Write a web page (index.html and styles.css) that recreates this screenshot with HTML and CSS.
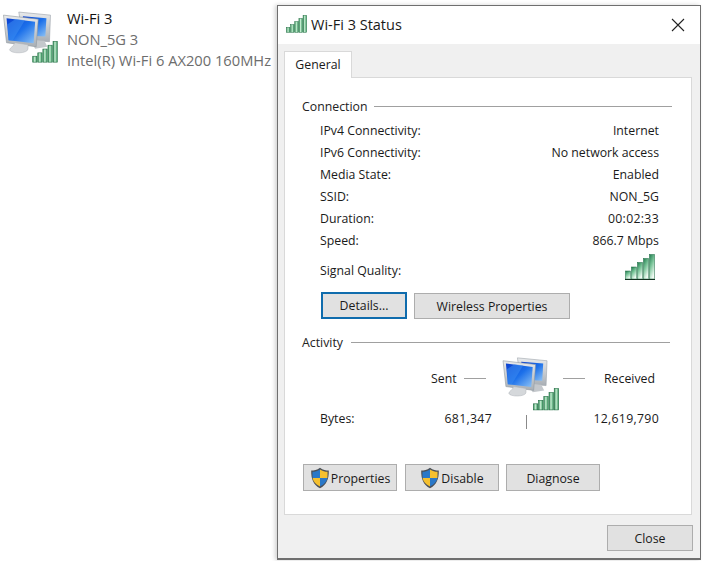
FILE: index.html
```html
<!DOCTYPE html>
<html lang="en">
<head>
<meta charset="utf-8">
<title>Wi-Fi 3 Status</title>
<link rel="stylesheet" href="styles.css">
</head>
<body>
<svg class="defs" width="0" height="0" aria-hidden="true">
  <defs>
    <linearGradient id="bar" x1="0" y1="0" x2="1" y2="0">
      <stop offset="0" stop-color="#2f8a55"/><stop offset=".45" stop-color="#c4ecd0"/><stop offset="1" stop-color="#3b9a62"/>
    </linearGradient>
    <linearGradient id="barv" x1="0" y1="0" x2=".5" y2="1">
      <stop offset="0" stop-color="#1f7a4d"/><stop offset=".5" stop-color="#7cc69b"/><stop offset="1" stop-color="#f0faf3"/>
    </linearGradient>
    <linearGradient id="screen" x1="0" y1="0" x2="1" y2="1">
      <stop offset="0" stop-color="#0a3fd0"/><stop offset=".5" stop-color="#1c70ea"/><stop offset="1" stop-color="#8fc4f5"/>
    </linearGradient>
    <linearGradient id="case" x1="0" y1="0" x2="0" y2="1">
      <stop offset="0" stop-color="#e8eaec"/><stop offset="1" stop-color="#a9afb5"/>
    </linearGradient>
    <symbol id="signal" viewBox="0 0 30 26">
      <g fill="url(#bar)" stroke="#1f6b40" stroke-width=".7">
        <rect x=".5" y="18" width="5" height="7"/>
        <rect x="6.500" y="14" width="5" height="11"/>
        <rect x="12.500" y="9.500" width="5" height="15.500"/>
        <rect x="18.500" y="5" width="5" height="20"/>
        <rect x="24.500" y=".5" width="5" height="24.500"/>
      </g>
    </symbol>
    <symbol id="signal-q" viewBox="0 0 30 26">
      <g fill="url(#barv)" stroke="#17683f" stroke-width=".5">
        <rect x=".5" y="17" width="5" height="8"/>
        <rect x="6.500" y="13" width="5" height="12"/>
        <rect x="12.500" y="8.500" width="5" height="16.500"/>
        <rect x="18.500" y="4.500" width="5" height="20.500"/>
        <rect x="24.500" y=".5" width="5" height="24.500"/>
      </g>
      <path d="M0 25.500H30" stroke="#12301f" stroke-width="1"/>
    </symbol>
    <symbol id="computers" viewBox="0 0 50 46">
      <path d="M16 3 47 6 46 32 20 30Z" fill="url(#case)" stroke="#9aa2a9" stroke-width=".6"/>
      <path d="M20 7 43 9 42 27 21 26Z" fill="url(#screen)"/>
      <path d="M27 30 41 31 44 37 32 39Z" fill="#c4c8cc"/>
      <path d="M1 6 35 10 33 37 4 33Z" fill="url(#case)" stroke="#8f979e" stroke-width=".6"/>
      <path d="M4 9 32 12.500 30.500 33.500 6 30.500Z" fill="url(#screen)"/>
      <path d="M13 9.800 22 11 10 30.800 6 30.500 5 15Z" fill="#3d8df0" opacity=".55"/>
      <path d="M12 33 25 35 25 39C25 44 8 44 7 40 7 38 11 37 12 33Z" fill="#d5d8db" stroke="#adb2b7" stroke-width=".5"/>
    </symbol>
    <symbol id="shield" viewBox="0 0 20 22">
      <path d="M10 .7C7 3 4 3.500 1.200 3.500 1 12 3.500 18 10 21.300 16.500 18 19 12 18.800 3.500 16 3.500 13 3 10 .7Z" fill="#4a4f57"/>
      <path d="M10 2.500V11H2.600C2.400 8.500 2.400 6.500 2.500 4.800 5 4.700 7.500 4.200 10 2.500Z" fill="#2a78c8"/>
      <path d="M10 2.500V11H17.400C17.600 8.500 17.600 6.500 17.500 4.800 15 4.700 12.500 4.200 10 2.500Z" fill="#f5c02f"/>
      <path d="M2.600 11H10V19.600C5.500 17 3.200 14.500 2.600 11Z" fill="#f5c02f"/>
      <path d="M17.400 11H10V19.600C14.500 17 16.800 14.500 17.400 11Z" fill="#2a78c8"/>
    </symbol>
  </defs>
</svg>

<main class="desktop">
  <section class="adapter">
    <span class="adapter-icon">
      <svg class="adapter-pc"><use href="#computers"/></svg>
      <svg class="adapter-signal"><use href="#signal"/></svg>
    </span>
    <div class="adapter-text">
      <div class="adapter-name">Wi-Fi 3</div>
      <div>NON_5G 3</div>
      <div>Intel(R) Wi-Fi 6 AX200 160MHz</div>
    </div>
  </section>

  <section class="window">
    <header class="titlebar">
      <svg class="title-signal"><use href="#signal"/></svg>
      <span class="title-text">Wi-Fi 3 Status</span>
      <svg class="close-x" viewBox="0 0 14 14"><path d="M1 1 13 13M13 1 1 13"/></svg>
    </header>
    <div class="client">
      <div class="tabs"><span class="tab">General</span></div>
      <div class="panel">
        <div class="legend legend-conn"><span>Connection</span><i></i></div>
        <dl class="rows">
          <div class="row"><dt>IPv4 Connectivity:</dt><dd>Internet</dd></div>
          <div class="row"><dt>IPv6 Connectivity:</dt><dd>No network access</dd></div>
          <div class="row"><dt>Media State:</dt><dd>Enabled</dd></div>
          <div class="row"><dt>SSID:</dt><dd>NON_5G</dd></div>
          <div class="row"><dt>Duration:</dt><dd class="digits">00:02:33</dd></div>
          <div class="row"><dt>Speed:</dt><dd>866.7 Mbps</dd></div>
          <div class="row row-signal"><dt>Signal Quality:</dt><dd><svg class="quality"><use href="#signal-q"/></svg></dd></div>
        </dl>
        <div class="btns btns-conn">
          <button class="btn btn-details">Details...</button>
          <button class="btn btn-wireless">Wireless Properties</button>
        </div>
        <div class="legend legend-act"><span>Activity</span><i></i></div>
        <div class="activity">
          <div class="sent"><span>Sent</span><i></i></div>
          <span class="act-icon">
            <svg class="act-pc"><use href="#computers"/></svg>
            <svg class="act-signal"><use href="#signal"/></svg>
          </span>
          <div class="received"><i></i><span>Received</span></div>
          <div class="bytes">Bytes:</div>
          <div class="num digits">681,347</div>
          <i class="tick"></i>
          <div class="num digits">12,619,790</div>
        </div>
        <div class="btns btns-act">
          <button class="btn btn-shield"><svg class="shield"><use href="#shield"/></svg><span class="btn-label">Properties</span></button>
          <button class="btn btn-shield btn-disable"><svg class="shield"><use href="#shield"/></svg><span class="btn-label">Disable</span></button>
          <button class="btn btn-shield"><span class="btn-label">Diagnose</span></button>
        </div>
      </div>
      <footer class="footer"><button class="btn btn-close">Close</button></footer>
    </div>
  </section>
</main>
</body>
</html>
```
FILE: styles.css
```css
* { box-sizing: border-box; }
html, body { margin: 0; padding: 0; height: 100%; background: #fff; overflow: hidden; }
body { font-family: "Open Sans", "Noto Sans", sans-serif; font-size: 12.3px; color: #1a1a1a; }
.defs { position: absolute; }
.desktop { display: flex; align-items: flex-start; height: 561px; }

.adapter { width: 277px; display: flex; padding-top: 8px; flex: none; }
.adapter-icon { position: relative; width: 67px; height: 58px; flex: none; }
.adapter-pc { position: absolute; left: 1px; top: 1px; width: 54px; height: 47px; }
.adapter-signal { position: absolute; left: 32px; top: 33px; width: 26px; height: 22px; }
.adapter-text { font-size: 14.7px; line-height: 21px; color: #6d6d6d; white-space: nowrap; }
.adapter-name { color: #111; }

.window { width: 424px; height: 555px; margin-top: 5px; border: 1px solid #6f6f6f; border-bottom-width: 2px; background: #f0f0f0; box-shadow: -2px 0 4px rgba(0,0,0,.18); display: flex; flex-direction: column; flex: none; }
.titlebar { height: 38px; background: #fff; display: flex; align-items: center; padding: 0 15px 2px 8px; flex: none; }
.title-signal { width: 21px; height: 18px; flex: none; margin-right: 4px; }
.title-text { font-size: 14.5px; flex: 1; }
.close-x { width: 14px; height: 14px; fill: none; stroke: #222; stroke-width: 1.1; margin-top: 2px; }

.client { padding: 7px 8px 0 6px; flex: 1; }
.tabs { height: 27px; display: flex; }
.tab { width: 68px; height: 27px; padding-bottom: 2px; background: #fff; border: 1px solid #d9d9d9; border-bottom: none; display: flex; align-items: center; justify-content: center; position: relative; z-index: 1; }
.panel { width: 408px; height: 438px; margin-top: -1px; background: #fff; border: 1px solid #d9d9d9; padding: 20px 0 0 17px; }

.legend { display: flex; align-items: center; height: 16px; color: #222; }
.legend i { height: 1px; background: #a0a0a0; margin-left: 8px; }
.legend-conn i { width: 298px; margin-left: 7px; }
.legend-act { margin-top: 15px; }
.legend-act i { width: 319px; }

.rows { margin: 5px 0 0; padding: 0 32px 0 18px; }
.row { display: flex; justify-content: space-between; height: 22px; align-items: center; }
.row dt, .row dd { margin: 0; }
.row-signal { margin-top: 8px; }
.quality { width: 30px; height: 26px; display: block; margin: -6px 4px 0 0; }
.digits { letter-spacing: .3px; }

.btns { display: flex; }
.btn { font: inherit; color: #1a1a1a; background: #e1e1e1; border: 1px solid #adadad; height: 27px; padding: 0; display: flex; align-items: center; justify-content: center; }
.btns-conn { margin: 11px 0 0 19px; gap: 7px; align-items: flex-end; }
.btn-details { width: 86px; border: 2px solid #0f6cad; }
.btn-wireless { width: 156px; height: 26px; }

.activity { display: grid; grid-template-columns: 111px 61px 68px 99px; grid-template-rows: 46px 34px; margin: 5px 0 0 18px; }
.sent { grid-column: 2; display: flex; align-items: center; gap: 7px; }
.sent i, .received i { width: 22px; height: 1px; background: #a0a0a0; }
.act-icon { grid-column: 3; position: relative; }
.act-pc { position: absolute; left: 9px; top: 0; width: 50px; height: 44px; }
.act-signal { position: absolute; left: 41px; top: 33px; width: 26px; height: 23px; }
.received { grid-column: 4; display: flex; align-items: center; padding-left: 3px; gap: 19px; white-space: nowrap; }
.bytes { grid-column: 1; align-self: center; }
.num { align-self: center; text-align: right; }
.tick { width: 1px; height: 14px; background: #8a8a8a; align-self: end; justify-self: start; margin: 0 0 6px 34px; }

.btns-act { margin: 29px 0 0 1px; gap: 8px; }
.btn-label { position: relative; top: 1px; }
.btn-shield { width: 94px; }
.btn-disable { margin-right: -1px; }
.shield { width: 20px; height: 22px; flex: none; margin-right: 1px; }

.footer { display: flex; justify-content: flex-end; padding: 10px 0 0; margin-right: -1px; }
.btn-close { width: 86px; height: 26px; }
```
